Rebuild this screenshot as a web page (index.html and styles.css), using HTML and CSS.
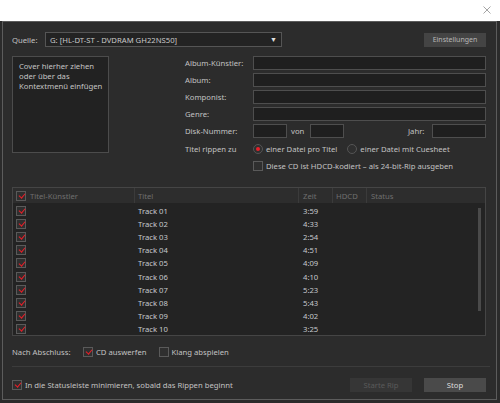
FILE: index.html
```html
<!DOCTYPE html>
<html lang="de">
<head>
<meta charset="utf-8">
<title>CD rippen</title>
<link rel="stylesheet" href="styles.css">
</head>
<body>
<div class="titlebar">
  <svg class="close" width="8" height="8" viewBox="0 0 8 8"><path d="M0.5 0.5L7.5 7.5M7.5 0.5L0.5 7.5" stroke="#9a9a9a" stroke-width="0.9" fill="none"/></svg>
</div>
<div class="frame">
<div class="window">
  <div class="source-row">
    <span class="src-lbl">Quelle:</span>
    <div class="select"><span>G: [HL-DT-ST - DVDRAM GH22NS50]</span><span class="arrow">▼</span></div>
    <button class="btn btn-settings">Einstellungen</button>
  </div>

  <div class="meta">
    <div class="cover">Cover hierher ziehen oder über das Kontextmenü einfügen</div>
    <div class="form">
      <div class="frow"><span class="flbl">Album-Künstler:</span><div class="input wide"></div></div>
      <div class="frow"><span class="flbl">Album:</span><div class="input wide"></div></div>
      <div class="frow"><span class="flbl">Komponist:</span><div class="input wide"></div></div>
      <div class="frow"><span class="flbl">Genre:</span><div class="input wide"></div></div>
      <div class="frow"><span class="flbl">Disk-Nummer:</span><div class="input num"></div><span class="von">von</span><div class="input num"></div><span class="jahr">Jahr:</span><div class="input year"></div></div>
      <div class="frow rip"><span class="flbl">Titel rippen zu</span>
        <span class="opt"><span class="radio on"></span>einer Datei pro Titel</span>
        <span class="opt opt2"><span class="radio"></span>einer Datei mit Cuesheet</span>
      </div>
      <div class="frow hdcd"><span class="flbl"></span><span class="opt"><span class="cb"></span>Diese CD ist HDCD-kodiert – als 24-bit-Rip ausgeben</span></div>
    </div>
  </div>

  <div class="table">
    <div class="thead">
      <div class="c c-artist"><span class="cb on"></span>Titel-Künstler</div>
      <div class="c c-title">Titel</div>
      <div class="c c-time">Zeit</div>
      <div class="c c-hdcd">HDCD</div>
      <div class="c c-status">Status</div>
    </div>
    <div class="tbody">
      <div class="tr"><div class="c c-artist"><span class="cb on"></span></div><div class="c c-title">Track 01</div><div class="c c-time">3:59</div><div class="c"></div><div class="c"></div></div>
      <div class="tr"><div class="c c-artist"><span class="cb on"></span></div><div class="c c-title">Track 02</div><div class="c c-time">4:33</div><div class="c"></div><div class="c"></div></div>
      <div class="tr"><div class="c c-artist"><span class="cb on"></span></div><div class="c c-title">Track 03</div><div class="c c-time">2:54</div><div class="c"></div><div class="c"></div></div>
      <div class="tr"><div class="c c-artist"><span class="cb on"></span></div><div class="c c-title">Track 04</div><div class="c c-time">4:51</div><div class="c"></div><div class="c"></div></div>
      <div class="tr"><div class="c c-artist"><span class="cb on"></span></div><div class="c c-title">Track 05</div><div class="c c-time">4:09</div><div class="c"></div><div class="c"></div></div>
      <div class="tr"><div class="c c-artist"><span class="cb on"></span></div><div class="c c-title">Track 06</div><div class="c c-time">4:10</div><div class="c"></div><div class="c"></div></div>
      <div class="tr"><div class="c c-artist"><span class="cb on"></span></div><div class="c c-title">Track 07</div><div class="c c-time">5:23</div><div class="c"></div><div class="c"></div></div>
      <div class="tr"><div class="c c-artist"><span class="cb on"></span></div><div class="c c-title">Track 08</div><div class="c c-time">5:43</div><div class="c"></div><div class="c"></div></div>
      <div class="tr"><div class="c c-artist"><span class="cb on"></span></div><div class="c c-title">Track 09</div><div class="c c-time">4:02</div><div class="c"></div><div class="c"></div></div>
      <div class="tr"><div class="c c-artist"><span class="cb on"></span></div><div class="c c-title">Track 10</div><div class="c c-time">3:25</div><div class="c"></div><div class="c"></div></div>
    </div>
    <div class="scrollbar"></div>
  </div>

  <div class="after-row">
    <span class="after-lbl">Nach Abschluss:</span>
    <span class="opt"><span class="cb on"></span>CD auswerfen</span>
    <span class="opt opt-sound"><span class="cb"></span>Klang abspielen</span>
  </div>

  <div class="sep"></div>

  <div class="bottom-row">
    <span class="opt"><span class="cb on"></span>In die Statusleiste minimieren, sobald das Rippen beginnt</span>
    <button class="btn btn-disabled">Starte Rip</button>
    <button class="btn btn-stop">Stop</button>
  </div>
</div>
</div>
</body>
</html>
```

FILE: styles.css
```css
* { box-sizing: border-box; }

html, body {
  margin: 0;
  padding: 0;
}

body {
  width: 500px;
  height: 403px;
  overflow: hidden;
  background: #ffffff;
  font-family: "Noto Sans", "Open Sans", sans-serif;
  font-size: 7.7px;
  color: #c2c2c2;
}

.titlebar {
  height: 21px;
  background: #ffffff;
  display: flex;
  justify-content: flex-end;
  align-items: center;
  padding-right: 9px;
  padding-bottom: 1px;
}

.close { display: block; }

.frame {
  height: 382px;
  background: #2b2b2b;
  padding: 0 3px 3px 2px;
}

.window {
  width: 495px;
  height: 379px;
  background: #2c2c2c;
  border: 1px solid #5c5c5c;
  padding: 10px 10px 0 9px;
  display: flex;
  flex-direction: column;
}

/* source row */
.source-row {
  display: flex;
  align-items: center;
  height: 15px;
}

.src-lbl { width: 33px; }

.select {
  width: 237px;
  height: 15px;
  border: 1px solid #555;
  background: #232323;
  display: flex;
  align-items: center;
  justify-content: space-between;
  padding: 0 4px 0 4px;
  color: #c8c8c8;
}

.arrow {
  font-size: 7px;
  color: #e0e0e0;
}

.btn {
  font-family: inherit;
  border: none;
  height: 14px;
  width: 62px;
  padding: 0;
  font-size: 7.7px;
}

.btn-settings {
  margin-left: auto;
  background: #444444;
  color: #b8b8b8;
  font-size: 7px;
}

/* meta area */
.meta {
  display: flex;
  height: 140px;
  padding-top: 9px;
}

.cover {
  width: 97px;
  height: 97px;
  border: 1px solid #4c4c4c;
  background: #222222;
  padding: 4px 3px 4px 6px;
  line-height: 10px;
  color: #c4c4c4;
}

.form {
  margin-left: 76px;
  flex: 1;
  display: flex;
  flex-direction: column;
}

.frow {
  display: flex;
  align-items: center;
  height: 14px;
  margin-bottom: 3px;
}

.flbl {
  width: 68px;
  flex: none;
}

.input {
  height: 14px;
  border: 1px solid #4e4e4e;
  background: #1f1f1f;
}

.input.wide { flex: 1; }
.input.num { width: 34px; }
.input.year { width: 54px; }

.von { width: 23px; padding-left: 4px; }
.jahr { margin-left: auto; width: 24px; }

.frow.rip { margin-top: 1px; }

.opt {
  display: inline-flex;
  align-items: center;
  white-space: nowrap;
}

.opt2 { margin-left: 10px; }

.radio {
  width: 10px;
  height: 10px;
  border-radius: 50%;
  border: 1px solid #555;
  background: #2f2f2f;
  margin-right: 3px;
  display: inline-flex;
  align-items: center;
  justify-content: center;
}

.radio.on::after {
  content: "";
  width: 4px;
  height: 4px;
  border-radius: 50%;
  background: #e8202a;
}

.cb {
  position: relative;
  width: 10px;
  height: 10px;
  border: 1px solid #5a5a5a;
  background: #2f2f2f;
  margin-right: 3px;
  flex: none;
  display: inline-block;
}

.cb.on::after {
  content: "";
  position: absolute;
  left: 2.5px;
  top: 0.2px;
  width: 2.8px;
  height: 5.2px;
  border: solid #ec1e28;
  border-width: 0 1.8px 1.8px 0;
  transform: rotate(40deg);
}

/* table */
.table {
  position: relative;
  height: 149px;
  border: 1px solid #454545;
  background: #232323;
}

.thead, .tr {
  display: grid;
  grid-template-columns: 121px 164px 34px 34px 1fr;
  align-items: center;
}

.thead {
  height: 15px;
  background: #2d2d2d;
  color: #6f6f6f;
}

.thead .c + .c { border-left: 1px solid #3b3b3b; }

.c {
  height: 100%;
  display: flex;
  align-items: center;
  white-space: nowrap;
}

.c-artist { padding-left: 3px; }
.c-artist .cb { margin-right: 4px; }
.c-title { padding-left: 4px; }
.c-time { padding-left: 5px; }
.c-hdcd { padding-left: 3px; }
.c-status { padding-left: 4px; }

.thead .c-title { padding-left: 3px; }
.thead .c-time { padding-left: 4px; }

.tbody { padding-top: 1px; }

.tr {
  height: 13.2px;
  color: #c6c9cd;
}

.scrollbar {
  position: absolute;
  right: 4px;
  top: 20px;
  width: 3px;
  height: 103px;
  background: #4a4a4a;
}

/* after row */
.after-row {
  display: flex;
  align-items: center;
  height: 15px;
  margin-top: 8px;
}

.after-lbl { width: 71px; }
.opt-sound { margin-left: 12px; }

.sep {
  height: 1px;
  background: #3c3c3c;
  margin-top: 7px;
  margin-right: -4px;
}

.bottom-row {
  display: flex;
  align-items: center;
  height: 14px;
  margin-top: 11px;
}

.btn-disabled {
  margin-left: auto;
  background: #363636;
  color: #5a5a5a;
}

.btn-stop {
  margin-left: 12px;
  background: #4a4a4a;
  color: #dedede;
}
```
